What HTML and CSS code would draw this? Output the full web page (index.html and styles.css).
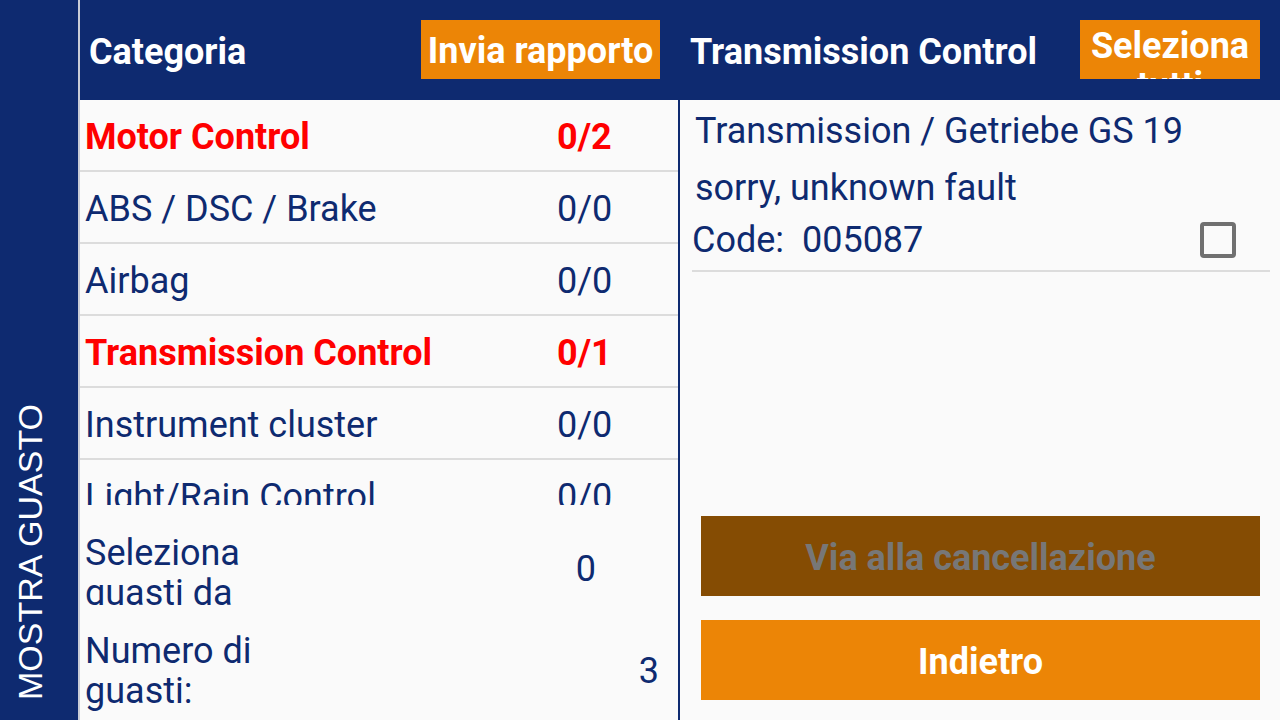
FILE: index.html
```html
<!DOCTYPE html>
<html lang="it">
<head>
<meta charset="utf-8">
<title>Mostra guasto</title>
<link rel="stylesheet" href="styles.css">
</head>
<body>
<div class="app">
  <aside class="sidebar"><span class="side-label">MOSTRA GUASTO</span></aside>
  <main class="main">
    <section class="col col-left">
      <header class="head">
        <h1 class="head-title">Categoria</h1>
        <button class="head-btn btn-report">Invia rapporto</button>
      </header>
      <div class="list">
        <div class="row alert"><span class="name">Motor Control</span><span class="num">0/2</span></div>
        <div class="row"><span class="name">ABS / DSC / Brake</span><span class="num">0/0</span></div>
        <div class="row"><span class="name">Airbag</span><span class="num">0/0</span></div>
        <div class="row alert"><span class="name">Transmission Control</span><span class="num">0/1</span></div>
        <div class="row"><span class="name">Instrument cluster</span><span class="num">0/0</span></div>
        <div class="row"><span class="name">Light/Rain Control</span><span class="num">0/0</span></div>
      </div>
      <div class="stat stat-sel">
        <span class="stat-label">Seleziona guasti da cancellare:</span>
        <span class="stat-val">0</span>
      </div>
      <div class="stat stat-count">
        <span class="stat-label">Numero di guasti:</span>
        <span class="stat-val">3</span>
      </div>
    </section>
    <section class="col col-right">
      <header class="head">
        <h1 class="head-title">Transmission Control</h1>
        <button class="head-btn btn-select">Seleziona tutti</button>
      </header>
      <div class="fault">
        <div class="fault-line">Transmission / Getriebe GS 19</div>
        <div class="fault-line">sorry, unknown fault</div>
        <div class="fault-code"><span>Code:&nbsp; 005087</span><span class="check"></span></div>
      </div>
      <div class="actions">
        <button class="act act-disabled">Via alla cancellazione</button>
        <button class="act act-back">Indietro</button>
      </div>
    </section>
  </main>
</div>
</body>
</html>
```

FILE: styles.css
```css
* { box-sizing: border-box; }
html, body { margin: 0; padding: 0; }
body {
  width: 1280px;
  height: 720px;
  overflow: hidden;
  font-family: Roboto, "Noto Sans", sans-serif;
  background: #fafafa;
  color: #0e2a70;
}
.app {
  display: flex;
  height: 720px;
}
.sidebar {
  width: 78px;
  flex: none;
  background: #0e2a70;
  display: flex;
  align-items: flex-end;
  justify-content: center;
  padding-bottom: 20px;
  padding-right: 18px;
}
.side-label {
  writing-mode: vertical-rl;
  transform: rotate(180deg);
  color: #fff;
  font-family: "Liberation Sans", Arial, sans-serif;
  font-size: 34px;
  line-height: 1;
  white-space: nowrap;
}
.main {
  flex: 1;
  display: flex;
  border-left: 2px solid #c9ccd6;
}
.col {
  display: flex;
  flex-direction: column;
  background: #fafafa;
}
.col-left {
  width: 600px;
  flex: none;
  border-right: 2px solid #0e2a70;
}
.col-right {
  flex: 1;
}
.head {
  height: 100px;
  flex: none;
  background: #0e2a70;
  display: flex;
  align-items: flex-start;
  justify-content: space-between;
}
.head-title {
  margin: 0;
  color: #fff;
  font-size: 36px;
  font-weight: 700;
  line-height: 100px;
  padding-top: 2px;
  white-space: nowrap;
}
.col-left .head-title { padding-left: 9px; }
.col-right .head-title { padding-left: 10px; }
.head-btn {
  margin-top: 20px;
  height: 59px;
  border: none;
  background: #ec8506;
  color: #fff;
  font-family: inherit;
  font-size: 36px;
  font-weight: 700;
  padding: 0;
  overflow: hidden;
}
.btn-report {
  width: 239px;
  margin-right: 18px;
  line-height: 59px;
  padding-top: 2px;
}
.btn-select {
  width: 180px;
  margin-right: 20px;
  line-height: 40px;
  padding-top: 6px;
  display: block;
  text-align: center;
}
.list {
  height: 405px;
  overflow: hidden;
  flex: none;
}
.row {
  height: 72px;
  display: flex;
  align-items: center;
  border-bottom: 2px solid #dcdcdc;
  font-size: 36px;
  padding-left: 5px;
  padding-top: 3px;
}
.row .name { flex: 1; white-space: nowrap; }
.row .num { width: 121px; }
.row.alert { color: #ff0000; font-weight: 700; }
.stat {
  display: flex;
  align-items: center;
  justify-content: space-between;
  font-size: 36px;
  padding-left: 5px;
}
.stat-label {
  width: 200px;
  line-height: 40px;
  overflow: hidden;
}
.stat-sel { margin-top: 28px; }
.stat-sel .stat-label { height: 72px; }
.stat-sel .stat-val { padding-right: 82px; }
.stat-count { margin-top: 26px; }
.stat-count .stat-label { height: 80px; }
.stat-count .stat-val { padding-right: 19px; }
.fault {
  padding: 0 10px 0 12px;
}
.fault-line {
  font-size: 36px;
  line-height: 57px;
  padding-left: 3px;
  white-space: nowrap;
}
.fault-line:first-child { margin-top: 3px; }
.fault-code {
  font-size: 36px;
  height: 64px;
  display: flex;
  align-items: center;
  justify-content: space-between;
  padding-right: 34px;
  padding-top: 2px;
  border-bottom: 2px solid #dcdcdc;
  margin-top: -9px;
}
.check {
  width: 36px;
  height: 36px;
  border: 4px solid #707070;
  border-radius: 4px;
}
.actions {
  margin-top: auto;
  padding: 0 20px 20px 21px;
  display: flex;
  flex-direction: column;
  gap: 24px;
}
.act {
  height: 80px;
  border: none;
  font-family: inherit;
  font-size: 36px;
  font-weight: 700;
  padding: 3px 0 0;
}
.act-disabled {
  background: #854c03;
  color: #777;
}
.act-back {
  background: #ec8506;
  color: #fff;
}
```
